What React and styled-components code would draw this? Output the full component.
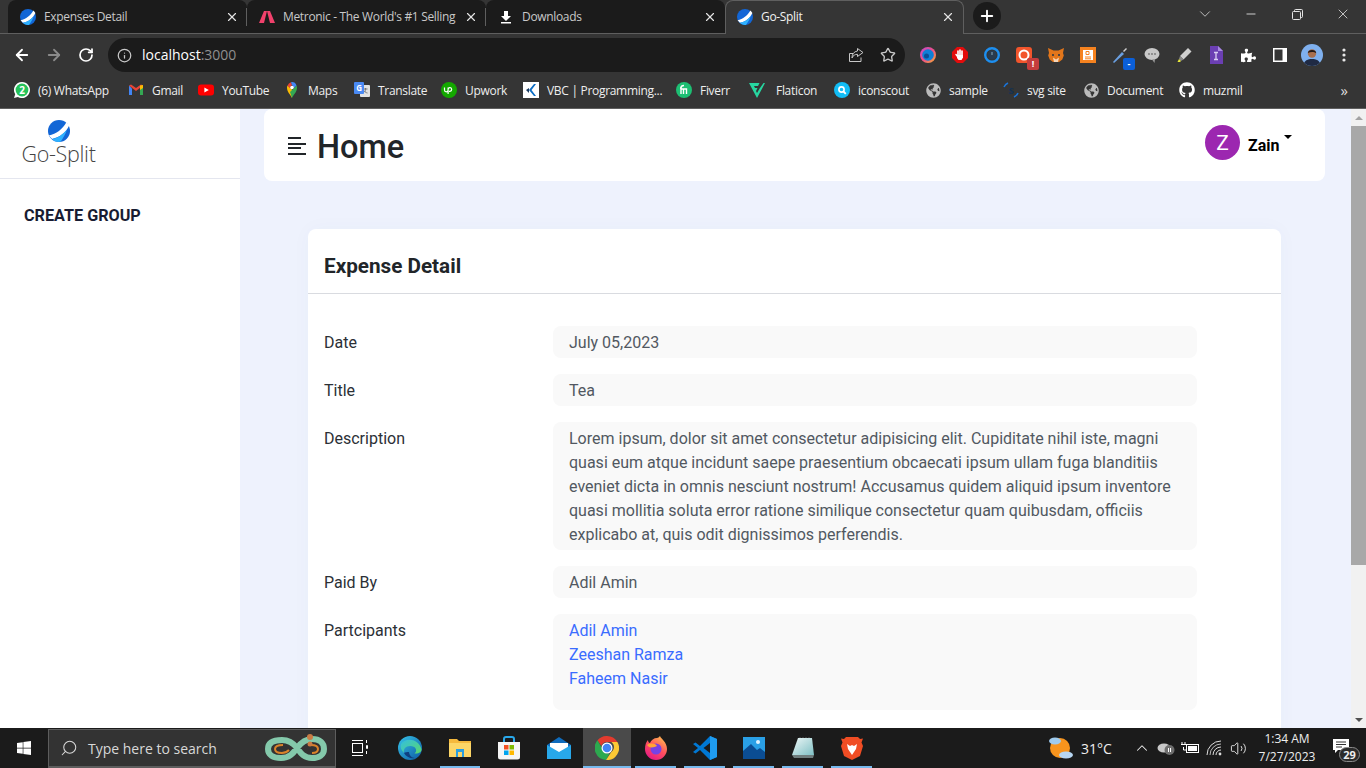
import React from 'react'
import styled, { createGlobalStyle } from 'styled-components'
import { ArrowLeft, ArrowRight, RotateCw, Info, Star, X, Plus, ChevronDown, Minus, Search, ChevronUp, Volume2 } from 'lucide-react'
import { FaGithub, FaPuzzlePiece, FaGlobeAmericas, FaWindows } from 'react-icons/fa'

const Global = createGlobalStyle`
  html, body { margin: 0; padding: 0; overflow: hidden; height: 100%; }
  #root { height: 100%; }
  * { box-sizing: border-box; }
  body { font-family: Roboto, "Noto Sans", sans-serif; }
`

const Screen = styled.div`
  height: 100vh;
  display: flex;
  flex-direction: column;
  background: #eef2fd;
`

/* browser chrome */
const BrowserBar = styled.div`
  flex: none;
  height: 109px;
  background: #353535;
  border-bottom: 1px solid #5f5f5f;
  font-family: "Open Sans", sans-serif;
  color: #e8eaed;
`
const TabStrip = styled.div`
  height: 34px;
  display: flex;
  align-items: flex-end;
  padding-left: 8px;
  border-bottom: 1px solid #5f5f5f;
`
const Tab = styled.div`
  position: relative;
  width: 239px;
  height: ${p => (p.$active ? '34px' : '33px')};
  margin-bottom: ${p => (p.$active ? '-1px' : '0')};
  display: flex;
  align-items: center;
  gap: 8px;
  padding: ${p => (p.$active ? '0 8px 2px 11px' : '0 8px 0 12px')};
  font-size: 12px;
  letter-spacing: -0.33px;
  background: ${p => (p.$active ? '#353535' : '#1b1b1b')};
  color: ${p => (p.$active ? '#f1f1f1' : '#c9c9c9')};
  border-radius: 8px 8px 0 0;
  border: ${p => (p.$active ? '1px solid #5f5f5f' : 'none')};
  border-bottom: none;
  span { flex: 1; white-space: nowrap; overflow: hidden; }
  svg { flex: none; }
  &::after {
    content: "";
    display: ${p => (p.$sep ? 'block' : 'none')};
    position: absolute;
    right: 0;
    top: 8px;
    height: 18px;
    width: 1px;
    background: #5f5f5f;
  }
`
const NewTab = styled.div`
  width: 28px;
  height: 28px;
  margin: 0 0 2px 9px;
  border-radius: 50%;
  background: #1b1b1b;
  color: #fff;
  display: flex;
  align-items: center;
  justify-content: center;
  align-self: center;
`
const WindowControls = styled.div`
  margin-left: auto;
  display: flex;
  align-self: flex-start;
  height: 28px;
  color: #e4e4e4;
`
const WindowButton = styled.div`
  width: 46px;
  display: flex;
  align-items: center;
  justify-content: center;
`
const Toolbar = styled.div`
  height: 38px;
  display: flex;
  align-items: center;
  padding-top: 4px;
`
const NavButton = styled.div`
  width: 32px;
  height: 32px;
  display: flex;
  align-items: center;
  justify-content: center;
  color: ${p => (p.$off ? '#8a8a8a' : '#fff')};
  &:first-child { margin-left: 6px; }
`
const Omnibox = styled.div`
  width: 797px;
  height: 34px;
  margin-left: 6px;
  border-radius: 17px;
  background: #1b1b1b;
  display: flex;
  align-items: center;
  padding: 0 1px 0 9px;
  font-size: 14px;
  color: #fff;
  em { font-style: normal; color: #8f8f8f; }
`
const Address = styled.div`
  flex: 1;
  margin-left: 10px;
  margin-top: -1px;
`
const OmniIcon = styled.div`
  width: 32px;
  display: flex;
  justify-content: center;
  color: #c8c8c8;
`
const Extensions = styled.div`
  margin-left: 7px;
  display: flex;
`
const ExtCell = styled.div`
  position: relative;
  width: 32px;
  height: 32px;
  display: flex;
  align-items: center;
  justify-content: center;
  color: #fff;
`
const ExtBadge = styled.div`
  position: absolute;
  right: 1px;
  bottom: 1px;
  width: 12px;
  height: 12px;
  border-radius: 2px;
  background: ${p => p.$bg};
  color: #fff;
  font-size: 9px;
  font-weight: 700;
  line-height: 12px;
  text-align: center;
`
const Bookmarks = styled.div`
  height: 36px;
  display: flex;
  align-items: center;
  padding-left: 14px;
`
const Bookmark = styled.div`
  width: ${p => p.$w}px;
  flex: none;
  display: flex;
  align-items: center;
  gap: 8px;
  font-size: 12px;
  letter-spacing: -0.3px;
  color: #eee;
  white-space: nowrap;
  svg { flex: none; }
`
const More = styled.div`
  margin-left: auto;
  margin-right: 18px;
  font-size: 15px;
  color: #ddd;
`

/* page */
const Page = styled.div`
  flex: 1;
  min-height: 0;
  display: flex;
  overflow: hidden;
`
const Sidebar = styled.aside`
  width: 240px;
  flex: none;
  background: #fff;
`
const Brand = styled.div`
  height: 69px;
  width: 117px;
  display: flex;
  flex-direction: column;
  align-items: center;
  padding-top: 11px;
`
const BrandRule = styled.div`
  height: 1px;
  background: #e4e6ef;
`
const BrandName = styled.div`
  font-family: "Open Sans", sans-serif;
  font-weight: 300;
  font-size: 21.5px;
  line-height: 23px;
  letter-spacing: -0.3px;
  color: #444;
`
const SideLink = styled.div`
  padding: 26px 24px;
  font-size: 16.2px;
  line-height: 22px;
  font-weight: 700;
  color: #181c32;
`
const Main = styled.main`
  flex: 1;
  min-width: 0;
  overflow: hidden;
`
const Header = styled.header`
  height: 72px;
  margin: 0 26px 48px 24px;
  background: #fff;
  border-radius: 8px;
  display: flex;
  align-items: center;
  padding: 4px 32px 0 24px;
  svg { margin-top: -2px; }
`
const Title = styled.h1`
  margin: 0 0 0 11px;
  font-size: 32.5px;
  line-height: 1;
  font-weight: 500;
  color: #212529;
`
const User = styled.div`
  margin-left: auto;
  display: flex;
  align-items: center;
  gap: 8px;
  padding-right: 9px;
  margin-top: -9px;
`
const Avatar = styled.div`
  width: 35px;
  height: 35px;
  border-radius: 50%;
  background: #9c27b0;
  color: #fff;
  font-size: 21px;
  display: flex;
  align-items: center;
  justify-content: center;
`
const UserName = styled.div`
  position: relative;
  width: 36px;
  font-size: 16px;
  font-weight: 700;
  color: #000;
  padding-top: 6px;
  &::after {
    content: "";
    position: absolute;
    left: 36px;
    top: 5px;
    border-left: 4.5px solid transparent;
    border-right: 4.5px solid transparent;
    border-top: 4px solid #000;
  }
`
const Card = styled.section`
  margin: 0 70px 0 68px;
  background: #fff;
  border-radius: 8px;
  box-shadow: 0 0 20px rgba(76, 87, 125, 0.03);
`
const CardHead = styled.div`
  height: 65px;
  padding: 24px 16px 0;
  border-bottom: 1px solid #d9dbe0;
  font-size: 20.7px;
  line-height: 27px;
  font-weight: 700;
  color: #212529;
`
const CardBody = styled.div`
  padding: 32px 16px 40px;
  display: grid;
  grid-template-columns: 229px 644px;
  row-gap: 16px;
  font-size: 16px;
  line-height: 24px;
`
const Label = styled.div`
  padding-top: 5px;
  color: #2b3036;
`
const Value = styled.div`
  background: #f9f9f9;
  border-radius: 8px;
  padding: 5px 16px ${p => p.$pb || 3}px;
  color: #515861;
`
const PersonLink = styled.a`
  display: block;
  color: #3a6cff;
  text-decoration: none;
`
const ScrollBar = styled.div`
  width: 15px;
  flex: none;
  background: #f1f1f1;
  display: flex;
  flex-direction: column;
  align-items: center;
`
const ScrollArrow = styled.div`
  flex: none;
  height: 17px;
  display: flex;
  align-items: center;
  justify-content: center;
  &::after {
    content: "";
    border-left: 4px solid transparent;
    border-right: 4px solid transparent;
    ${p => (p.$down ? 'border-top: 4px solid #505050;' : 'border-bottom: 4px solid #a3a3a3;')}
  }
`
const ScrollThumb = styled.div`
  width: 100%;
  height: 439px;
  background: #a8a8a8;
`
const ScrollGap = styled.div`
  flex: 1;
`

/* windows taskbar */
const Taskbar = styled.div`
  flex: none;
  height: 40px;
  background: #1b1b1b;
  display: flex;
  font-family: "Open Sans", sans-serif;
  color: #fff;
`
const StartButton = styled.div`
  width: 48px;
  display: flex;
  align-items: center;
  justify-content: center;
`
const SearchBox = styled.div`
  width: 288px;
  margin-top: 1px;
  background: #333;
  border: 1px solid #5d5d5d;
  border-bottom-width: 2px;
  display: flex;
  align-items: center;
  padding-left: 11px;
  gap: 10px;
  font-size: 14px;
  color: #d8d8d8;
`
const SearchIcon = styled(Search)`
  transform: scaleX(-1);
`
const SearchArt = styled.div`
  margin-left: auto;
  margin-right: 8px;
  display: flex;
`
const TaskButton = styled.div`
  position: relative;
  width: ${p => p.$w || 49}px;
  flex: none;
  display: flex;
  align-items: center;
  justify-content: center;
  padding-bottom: 1px;
  background: ${p => (p.$active ? '#4a4a4a' : 'none')};
  &::after {
    content: "";
    display: ${p => (p.$open ? 'block' : 'none')};
    position: absolute;
    bottom: 0;
    height: 2px;
    left: ${p => (p.$active ? 0 : 4)}px;
    right: ${p => (p.$active ? 0 : 4)}px;
    background: #76b9ed;
  }
`
const Tray = styled.div`
  margin-left: auto;
  display: flex;
  align-items: center;
  color: #eee;
`
const TrayCell = styled.div`
  width: ${p => p.$w || 24}px;
  display: flex;
  align-items: center;
  justify-content: ${p => (p.$left ? 'flex-start' : 'center')};
  padding-left: ${p => (p.$left ? 7 : 0)}px;
  font-size: 14px;
`
const Clock = styled.div`
  width: 74px;
  text-align: center;
  font-size: 12px;
  line-height: 18px;
`
const Notice = styled.div`
  position: relative;
  width: 42px;
  height: 100%;
  display: flex;
  align-items: center;
  justify-content: center;
  padding: 0 8px 4px 0;
`
const NoticeCount = styled.div`
  position: absolute;
  right: 6px;
  bottom: 6px;
  width: 21px;
  height: 15px;
  border-radius: 8px;
  background: #2b2b2b;
  border: 1px solid #8a8a8a;
  font-size: 11px;
  font-weight: 700;
  line-height: 13px;
  text-align: center;
`

const GoSplitMark = ({ size = 16 }) => (
  <svg width={size} height={size} viewBox="0 0 16 16">
    <circle cx="8" cy="8" r="8" fill="#1266d6" />
    <path d="M.6 11.2C6 10.4 10.6 6.4 13.4 1.6l2 2.4C13 9 9 12.4 3 13.8z" fill="#fff" />
    <path d="M3 13.8c4-.7 7.6-3 10.6-6.600-.6 2.600-3 6.600-4.600 8.700-2.500.4-4.700-.5-6-2.100z" fill="#2fb2ff" />
  </svg>
)
const MetronicIcon = () => (
  <svg width="16" height="16" viewBox="0 0 16 16">
    <path d="M5 2h3L5 14H0z" fill="#f1416c" />
    <path d="M8 2h3l5 12h-5z" fill="#f1416c" />
  </svg>
)
const DownloadIcon = () => (
  <svg width="16" height="16" viewBox="0 0 16 16" fill="#fff">
    <path d="M6 2h4v5h3l-5 5-5-5h3z" />
    <rect x="3" y="13" width="10" height="1.500" />
  </svg>
)
const WhatsAppIcon = () => (
  <svg width="16" height="16" viewBox="0 0 16 16">
    <path d="M8 0a8 8 0 0 0-6.800 12.200L0 16l3.900-1.100A8 8 0 1 0 8 0z" fill="#fff" />
    <circle cx="8" cy="8" r="6.400" fill="#25c25a" />
    <text x="8" y="11.500" fontSize="10" fontWeight="700" fill="#fff" textAnchor="middle" fontFamily="Open Sans">2</text>
  </svg>
)
const GmailIcon = () => (
  <svg width="16" height="16" viewBox="0 0 16 16">
    <path d="M1 3.500V13h3V6.500z" fill="#4285f4" />
    <path d="M12 6.500V13h3V3.500z" fill="#34a853" />
    <path d="M1 3.500 8 9l7-5.500-2-1L8 6 3 2.500z" fill="#ea4335" />
    <path d="M12 3.500 15 3v3l-3 2z" fill="#fbbc04" />
  </svg>
)
const YouTubeIcon = () => (
  <svg width="16" height="16" viewBox="0 0 16 16">
    <rect y="2.500" width="16" height="11" rx="3" fill="#f00" />
    <path d="M6.400 5.500 10.800 8l-4.400 2.500z" fill="#fff" />
  </svg>
)
const MapsIcon = () => (
  <svg width="16" height="16" viewBox="0 0 16 16">
    <path d="M8 16C6 12 3 10 3 5.500 3 5 3.200 4 3.600 3.400L8 7.500z" fill="#fbbc04" />
    <path d="M8 16c2-4 5-6 5-10.500 0-.7-.2-1.400-.5-2L6 10z" fill="#34a853" />
    <path d="M3.600 3.400A5 5 0 0 1 7 .2L8 3 5.500 6z" fill="#ea4335" />
    <path d="M7 .2A5 5 0 0 1 12.500 3.500L10 6 8 3z" fill="#4285f4" />
    <circle cx="8" cy="5.500" r="1.800" fill="#fff" />
  </svg>
)
const TranslateIcon = () => (
  <svg width="16" height="16" viewBox="0 0 16 16">
    <rect x="6" y="3" width="10" height="12" rx="1" fill="#e2e2e2" />
    <path d="M9.500 7h4M11.500 6v1c0 2-1 3-2.500 4M10.500 9c.6 1 1.500 1.700 3 2" stroke="#777" fill="none" />
    <rect width="10" height="12" rx="1" fill="#4a8af4" />
    <text x="5" y="9" fontSize="8" fontWeight="700" fill="#fff" textAnchor="middle" fontFamily="Open Sans">G</text>
  </svg>
)
const UpworkIcon = () => (
  <svg width="16" height="16" viewBox="0 0 16 16">
    <circle cx="8" cy="8" r="8" fill="#14a800" />
    <path d="M3.500 5.500V8a1.800 1.800 0 0 0 3.600 0V7.300a1.800 1.800 0 1 1 1.800 2H8M7.100 12V5.500" stroke="#fff" strokeWidth="1.200" fill="none" />
  </svg>
)
const VbcIcon = () => (
  <svg width="16" height="16" viewBox="0 0 16 16">
    <rect width="16" height="16" fill="#fff" />
    <path d="M6 8 11 2h2L8.500 8l4.500 6h-2z" fill="#0a6cc4" />
    <path d="M3 8l3-2v5z" fill="#1c3a5e" />
  </svg>
)
const FiverrIcon = () => (
  <svg width="16" height="16" viewBox="0 0 16 16">
    <circle cx="8" cy="8" r="8" fill="#1dbf73" />
    <path d="M5 12V6h-1M5 6c0-2 1-2.500 3-2.500M5 7h5.500v5M7.500 7v5" stroke="#fff" strokeWidth="1.400" fill="none" />
  </svg>
)
const FlaticonIcon = () => (
  <svg width="19" height="16" viewBox="0 0 19 16">
    <path d="M0 1h10.500L9 4H5l1 2h2.500L7 9l1 2 2.300-4L14.500 1H16l-8 15z" fill="#27d6a0" />
  </svg>
)
const IconScoutIcon = () => (
  <svg width="16" height="16" viewBox="0 0 16 16">
    <circle cx="8" cy="8" r="8" fill="#12bdf5" />
    <circle cx="7.500" cy="7.500" r="2.600" stroke="#fff" strokeWidth="1.600" fill="none" />
    <path d="m9.500 9.500 2.300 2.300" stroke="#fff" strokeWidth="1.800" />
  </svg>
)
const SvgSiteIcon = () => (
  <svg width="16" height="16" viewBox="0 0 16 16" fill="none">
    <path d="M1 5a8 8 0 0 1 4-4M15 11a8 8 0 0 1-4 4" stroke="#1a73d8" strokeWidth="1.500" />
    <text x="8" y="12" fontSize="11" fontWeight="700" fill="#17314f" textAnchor="middle" fontFamily="Open Sans">s</text>
  </svg>
)
const ShareIcon = () => (
  <svg width="16" height="16" viewBox="0 0 16 16" fill="none" stroke="currentColor" strokeWidth="1">
    <path d="M13 10.500V14.500H1.500V6.500H5" />
    <path d="M9.500 1.500 15 5.500 9.500 9.500V7.300C7 7.300 5 8.500 4 11c0-4 2-6.500 5.500-7z" />
  </svg>
)
const ColorRing = () => (
  <svg width="16" height="16" viewBox="0 0 16 16">
    <defs>
      <linearGradient id="ring" x1="0" y1="0" x2="1" y2="1">
        <stop offset="0" stopColor="#c04bd0" />
        <stop offset=".5" stopColor="#ee4f88" />
        <stop offset="1" stopColor="#f7b32f" />
      </linearGradient>
    </defs>
    <circle cx="8" cy="8" r="8" fill="url(#ring)" />
    <circle cx="8" cy="8" r="5.800" fill="#0f7fd6" />
    <circle cx="6.500" cy="9" r="2.500" fill="#0a4d96" />
  </svg>
)
const BlockIcon = () => (
  <svg width="16" height="16" viewBox="0 0 16 16">
    <path d="M5 0h6l5 5v6l-5 5H5l-5-5V5z" fill="#e40c0c" />
    <path d="M6 4v5M8 3v6M10 4v5" stroke="#fff" strokeWidth="1.700" strokeLinecap="round" />
    <path d="M5 8h6v2.500L9.500 13h-3L5 11z" fill="#fff" />
    <path d="M4 7.500 6 10" stroke="#fff" strokeWidth="1.500" strokeLinecap="round" />
  </svg>
)
const BlueRing = () => (
  <svg width="16" height="16" viewBox="0 0 16 16" fill="none">
    <circle cx="8" cy="8" r="6.800" stroke="#1d8ff0" strokeWidth="2.400" />
    <circle cx="8" cy="8" r="4.500" fill="#283b50" />
    <path d="M8 5v3" stroke="#8ab" />
  </svg>
)
const CaptureIcon = () => (
  <svg width="16" height="16" viewBox="0 0 16 16" fill="none">
    <rect width="16" height="16" rx="3" fill="#f3552c" />
    <circle cx="8" cy="8" r="4.500" stroke="#fff" strokeWidth="2" />
  </svg>
)
const FoxIcon = () => (
  <svg width="16" height="16" viewBox="0 0 16 16">
    <path d="M0 1l5.500 2.500h5L16 1l-1 5 .8 2.500-1.500 4-3.300 2.500H5l-3.300-2.500-1.500-4L1 6z" fill="#e2761b" />
    <path d="M5 10.500 8 12.500l3-2-1 4.500H6z" fill="#f6d5b8" />
    <circle cx="5" cy="8" r="1" fill="#233447" />
    <circle cx="11" cy="8" r="1" fill="#233447" />
  </svg>
)
const SlidesIcon = () => (
  <svg width="16" height="16" viewBox="0 0 16 16">
    <rect width="16" height="16" fill="#f5821f" />
    <rect x="3" y="3" width="10" height="10" fill="#fff" />
    <path d="M5 10h6M5 11.800h6M6 4.500h3v3H6z" stroke="#f5821f" fill="none" />
  </svg>
)
const DropperIcon = () => (
  <svg width="16" height="16" viewBox="0 0 16 16">
    <path d="M1 15 10 5l2 2-10 9z" fill="#6a9fe0" />
    <path d="M11 4l3-3 1 1-3 3z" fill="#cfcfcf" />
  </svg>
)
const BalloonIcon = () => (
  <svg width="16" height="16" viewBox="0 0 16 16">
    <ellipse cx="8" cy="7" rx="7.500" ry="6" fill="#c8c8c8" />
    <path d="M8 12.500 10.500 16l.5-4z" fill="#9a9a9a" />
    <circle cx="5" cy="7" r=".9" fill="#777" />
    <circle cx="8" cy="7" r=".9" fill="#777" />
    <circle cx="11" cy="7" r=".9" fill="#777" />
  </svg>
)
const MarkerIcon = () => (
  <svg width="16" height="16" viewBox="0 0 16 16">
    <path d="M4 9 12 1l3.500 3.500-8 8z" fill="#cfcfcf" />
    <path d="M4 9l3.500 3.500L5 14l-2-2z" fill="#8a8a8a" />
    <path d="M3 12l2 2-1 1H1.500z" fill="#e8e83a" />
  </svg>
)
const PurpleDoc = () => (
  <svg width="16" height="18" viewBox="0 0 16 18">
    <path d="M2 0h8l5 5v13H2z" fill="#6b3fb3" />
    <path d="M10 0v5h5z" fill="#a98be0" />
    <path d="M6 6.500h4M8 6.500v7M6 13.500h4" stroke="#d9cdf2" strokeWidth="1.300" />
  </svg>
)
const SidePanel = () => (
  <svg width="14" height="14" viewBox="0 0 14 14">
    <rect width="14" height="14" fill="#fff" />
    <rect x="1.500" y="1.500" width="8" height="11" fill="#353535" />
  </svg>
)
const ProfileIcon = () => (
  <svg width="22" height="22" viewBox="0 0 22 22">
    <clipPath id="profile"><circle cx="11" cy="11" r="11" /></clipPath>
    <g clipPath="url(#profile)">
      <rect width="22" height="22" fill="#7fb0ee" />
      <path d="M2 22c1-6 5-7 9-7s8 1 9 7z" fill="#1f2a44" />
      <circle cx="11" cy="9.500" r="4.200" fill="#a86f4f" />
      <path d="M6.800 9c0-4 8.400-4 8.400 0-2-1.500-6-1.500-8.400 0z" fill="#221a18" />
    </g>
  </svg>
)
const Dots = () => (
  <svg width="4" height="14" viewBox="0 0 4 14" fill="#e8e8e8">
    <circle cx="2" cy="2" r="1.600" />
    <circle cx="2" cy="7" r="1.600" />
    <circle cx="2" cy="12" r="1.600" />
  </svg>
)
const RestoreIcon = () => (
  <svg width="11" height="11" viewBox="0 0 11 11" fill="none" stroke="currentColor">
    <rect x=".5" y="2.500" width="8" height="8" rx="1" />
    <path d="M2.500 2.500V1.500a1 1 0 0 1 1-1h6a1 1 0 0 1 1 1v6a1 1 0 0 1-1 1h-1" />
  </svg>
)
const MenuLines = () => (
  <svg width="18" height="18" viewBox="0 0 18 18" stroke="#212529" strokeWidth="2">
    <path d="M0 1h13M0 7h18M0 11h13M0 17h18" />
  </svg>
)

const SnakeArt = () => (
  <svg width="62" height="34" viewBox="0 0 62 34" fill="none">
    <path d="M17 9C8 9 3 12 3 18s5 9 13 9c9 0 13-6 16-10s7-9 15-9c8 0 12 4 12 10s-5 9-12 9c-9 0-12-6-15-10S24 9 17 9z" stroke="#84c9ab" strokeWidth="6" />
    <path d="M18 14c-5 0-8 1-8 4s3 4 7 4c3 0 5-1 7-3M46 14c5 0 7 1 7 4s-3 4-6 4" stroke="#d9832a" strokeWidth="2" />
    <circle cx="45" cy="6" r="3" fill="#c97c45" />
    <circle cx="45" cy="13" r="2.500" fill="#c97c45" />
  </svg>
)
const TaskViewIcon = () => (
  <svg width="16" height="16" viewBox="0 0 16 16" fill="none" stroke="#fff">
    <path d="M0 .5h11M0 15.500h11" />
    <rect x=".5" y="3.500" width="10" height="9" />
    <path d="M14.500 0v3M14.500 5.500h1v3h-1zM14.500 11v3" />
  </svg>
)
const EdgeIcon = () => (
  <svg width="24" height="24" viewBox="0 0 24 24">
    <defs>
      <linearGradient id="edgeA" x1="0" y1="0" x2="1" y2="1">
        <stop offset="0" stopColor="#37c4e8" />
        <stop offset="1" stopColor="#0c59a4" />
      </linearGradient>
      <linearGradient id="edgeB" x1="0" y1="0" x2="1" y2="1">
        <stop offset="0" stopColor="#33bfe0" />
        <stop offset="1" stopColor="#5ad66b" />
      </linearGradient>
    </defs>
    <circle cx="12" cy="12" r="12" fill="url(#edgeA)" />
    <path d="M3 8c3-6 17-7 20.500 5 .5 3-3 5-7 4.500 3-2 2-7-3.500-7.500C8 9.500 5 13 6 17 3 14 2 11 3 8z" fill="url(#edgeB)" />
    <path d="M6 17c2 4 7 6 11 5-3 0-6-3-6-6-2 0-4 0-5 1z" fill="#0f3f80" />
  </svg>
)
const FolderIcon = () => (
  <svg width="22" height="20" viewBox="0 0 22 20">
    <path d="M0 1h8l2 2h12v16H0z" fill="#f5b93d" />
    <path d="M0 5h22v14H0z" fill="#fcd667" />
    <path d="M7 11h8v8H7z" fill="#2b9fe0" />
    <path d="M9 14h4v5H9z" fill="#fcd667" />
  </svg>
)
const StoreIcon = () => (
  <svg width="24" height="24" viewBox="0 0 24 24">
    <path d="M7 6V3a2 2 0 0 1 2-2h6a2 2 0 0 1 2 2v3" stroke="#29a8ea" strokeWidth="2" fill="none" />
    <path d="M1 6h22v15a2.500 2.500 0 0 1-2.500 2.500h-17A2.500 2.500 0 0 1 1 21z" fill="#f5f5f5" />
    <rect x="7" y="9" width="4.500" height="4.500" fill="#f25022" />
    <rect x="12.500" y="9" width="4.500" height="4.500" fill="#7fba00" />
    <rect x="7" y="14.500" width="4.500" height="4.500" fill="#00a4ef" />
    <rect x="12.500" y="14.500" width="4.500" height="4.500" fill="#ffb900" />
  </svg>
)
const MailIcon = () => (
  <svg width="24" height="22" viewBox="0 0 24 22">
    <path d="M0 8 12 0l12 8v14H0z" fill="#0f6cbd" />
    <path d="M3 6h18v6l-9 5-9-5z" fill="#fff" />
    <path d="M0 8l12 7 12-7v14H0z" fill="#28a8ea" />
  </svg>
)
const ChromeIcon = () => (
  <svg width="24" height="24" viewBox="0 0 24 24">
    <path d="M12 0a12 12 0 0 1 10.400 6H12a6 6 0 0 0-5.700 4L2.500 4.300A12 12 0 0 1 12 0z" fill="#e33b2e" />
    <path d="M2.500 4.300 8 14a6 6 0 0 0 6.500 3.500L11 24A12 12 0 0 1 2.500 4.300z" fill="#2da94f" />
    <path d="M22.400 6A12 12 0 0 1 11 24l5.300-8a6 6 0 0 0 0-10z" fill="#fcc934" />
    <circle cx="12" cy="12" r="5.500" fill="#fff" />
    <circle cx="12" cy="12" r="4.300" fill="#4285f4" />
  </svg>
)
const FirefoxIcon = () => (
  <svg width="24" height="24" viewBox="0 0 24 24">
    <defs>
      <linearGradient id="fox" x1="0.800" y1="0" x2="0.200" y2="1">
        <stop offset="0" stopColor="#ffbd4f" />
        <stop offset=".5" stopColor="#ff4f5e" />
        <stop offset="1" stopColor="#e31587" />
      </linearGradient>
    </defs>
    <path d="M16 0c1 3 7 6 7 13a11 11 0 0 1-22 0C1 9 2 6 4 4c0 2 1 3 2 3 1-3 4-5 7-5 1 0 2-1 3-2z" fill="url(#fox)" />
    <circle cx="12" cy="13" r="5.500" fill="#7542e5" />
    <path d="M3 9c3-2 8-2 10 1-2 1-5 2-8 1z" fill="#ffa436" />
  </svg>
)
const VsCodeIcon = () => (
  <svg width="24" height="24" viewBox="0 0 24 24">
    <path d="M17 0 7 10 2.500 6.500 0 8l5 4-5 4 2.500 1.500L7 14l10 10 7-3V3z" fill="#0078d4" />
    <path d="M17 0l7 3v18l-7 3z" fill="#1f9cf0" />
    <path d="M17 7 10.500 12 17 17z" fill="#1b1b1b" />
  </svg>
)
const PhotosIcon = () => (
  <svg width="22" height="22" viewBox="0 0 22 22">
    <rect width="22" height="22" fill="#2aa0e6" />
    <path d="M0 14 8 7l6 6 3-2 5 4v7H0z" fill="#0b4d93" />
    <circle cx="15" cy="5" r="2" fill="#dff3ff" />
  </svg>
)
const NotesIcon = () => (
  <svg width="24" height="22" viewBox="0 0 24 22">
    <defs>
      <linearGradient id="note" x1="0" y1="0" x2="1" y2="1">
        <stop offset="0" stopColor="#eef7f7" />
        <stop offset="1" stopColor="#7fc0c4" />
      </linearGradient>
    </defs>
    <path d="M7 1h14l2 17H1z" fill="url(#note)" />
    <path d="M9 1v-.5M12 1v-.5M15 1v-.5M18 1v-.5" stroke="#999" />
    <path d="M1 18h22l-1 3H3z" fill="#6f7d7d" />
  </svg>
)
const BraveIcon = () => (
  <svg width="22" height="24" viewBox="0 0 22 24">
    <path d="M5 1h12l2 2 3-.5-1.500 4 1.500 3.500-3 10-8 4-8-4-3-10 1.500-3.500L0 2.500 3 3z" fill="#f04d24" />
    <path d="M6 8l3 2 2-1 2 1 3-2-1 5-2 3-2 3-2-3-2-3z" fill="#fff" />
  </svg>
)
const WeatherIcon = () => (
  <svg width="26" height="24" viewBox="0 0 26 24">
    <circle cx="12" cy="12" r="10" fill="#f7941d" />
    <ellipse cx="7" cy="5" rx="6" ry="3.500" fill="#9fcbee" />
    <ellipse cx="18" cy="19" rx="7" ry="3.500" fill="#b7d6f2" />
  </svg>
)
const CloudPause = () => (
  <svg width="18" height="16" viewBox="0 0 18 16">
    <ellipse cx="7" cy="8" rx="6.500" ry="4.500" fill="#c8c8c8" />
    <circle cx="12.500" cy="10" r="5" fill="#6e6e6e" />
    <path d="M11.500 8v4M13.500 8v4" stroke="#fff" />
  </svg>
)
const BatteryIcon = () => (
  <svg width="18" height="14" viewBox="0 0 18 14" fill="none" stroke="#fff">
    <rect x="5.500" y="3.500" width="12" height="8" />
    <rect x="7" y="5" width="9" height="5" fill="#fff" stroke="none" />
    <path d="M1 1v2M4 1v2M0 3.500h5M2.500 6v3h3" />
  </svg>
)
const WifiIcon = () => (
  <svg width="16" height="16" viewBox="0 0 16 16" fill="none" stroke="#ddd">
    <path d="M1 15A14 14 0 0 1 15 1" />
    <path d="M4 15A11 11 0 0 1 15 4" opacity=".8" />
    <path d="M7 15a8 8 0 0 1 8-8" />
    <path d="M10 15a5 5 0 0 1 5-5" />
    <circle cx="14" cy="14" r="1.400" fill="#ddd" stroke="none" />
  </svg>
)
const NoticeIcon = () => (
  <svg width="16" height="14" viewBox="0 0 16 14">
    <path d="M0 0h16v11H5l-3 3v-3H0z" fill="#fff" />
    <path d="M3 3h10M3 5.500h10M3 8h6" stroke="#333" />
  </svg>
)

const tabs = [
  { icon: <GoSplitMark />, label: 'Expenses Detail', sep: true },
  { icon: <MetronicIcon />, label: "Metronic - The World's #1 Selling", sep: true },
  { icon: <DownloadIcon />, label: 'Downloads' },
  { icon: <GoSplitMark />, label: 'Go-Split', active: true },
]

const marks = [
  { icon: <WhatsAppIcon />, label: '(6) WhatsApp', w: 114 },
  { icon: <GmailIcon />, label: 'Gmail', w: 70 },
  { icon: <YouTubeIcon />, label: 'YouTube', w: 86 },
  { icon: <MapsIcon />, label: 'Maps', w: 70 },
  { icon: <TranslateIcon />, label: 'Translate', w: 87 },
  { icon: <UpworkIcon />, label: 'Upwork', w: 82 },
  { icon: <VbcIcon />, label: 'VBC | Programming...', w: 153 },
  { icon: <FiverrIcon />, label: 'Fiverr', w: 73 },
  { icon: <FlaticonIcon />, label: 'Flaticon', w: 85 },
  { icon: <IconScoutIcon />, label: 'iconscout', w: 92 },
  { icon: <FaGlobeAmericas size={15} color="#bbb" />, label: 'sample', w: 77 },
  { icon: <SvgSiteIcon />, label: 'svg site', w: 81 },
  { icon: <FaGlobeAmericas size={15} color="#bbb" />, label: 'Document', w: 95 },
  { icon: <FaGithub size={16} color="#fff" />, label: 'muzmil', w: 80 },
]

const apps = [
  { icon: <EdgeIcon />, w: 52 },
  { icon: <FolderIcon />, w: 48, open: true },
  { icon: <StoreIcon />, w: 50 },
  { icon: <MailIcon />, w: 49 },
  { icon: <ChromeIcon />, w: 48, open: true, active: true },
  { icon: <FirefoxIcon />, w: 49, open: true },
  { icon: <VsCodeIcon />, w: 49, open: true },
  { icon: <PhotosIcon />, w: 49, open: true },
  { icon: <NotesIcon />, w: 49, open: true },
  { icon: <BraveIcon />, w: 49, open: true },
]

const expense = [
  { label: 'Date', value: 'July 05,2023' },
  { label: 'Title', value: 'Tea' },
  {
    label: 'Description',
    value:
      'Lorem ipsum, dolor sit amet consectetur adipisicing elit. Cupiditate nihil iste, magni quasi eum atque incidunt saepe praesentium obcaecati ipsum ullam fuga blanditiis eveniet dicta in omnis nesciunt nostrum! Accusamus quidem aliquid ipsum inventore quasi mollitia soluta error ratione similique consectetur quam quibusdam, officiis explicabo at, quis odit dignissimos perferendis.',
  },
  { label: 'Paid By', value: 'Adil Amin' },
]

const people = ['Adil Amin', 'Zeeshan Ramza', 'Faheem Nasir']

export default function App() {
  return (
    <Screen>
      <Global />
      <BrowserBar>
        <TabStrip>
          {tabs.map(t => (
            <Tab key={t.label} $active={t.active} $sep={t.sep}>
              {t.icon}
              <span>{t.label}</span>
              <X size={14} color="#e4e4e4" />
            </Tab>
          ))}
          <NewTab><Plus size={18} strokeWidth={2.5} /></NewTab>
          <WindowControls>
            <WindowButton><ChevronDown size={18} strokeWidth={1} /></WindowButton>
            <WindowButton><Minus size={14} strokeWidth={1.5} /></WindowButton>
            <WindowButton><RestoreIcon /></WindowButton>
            <WindowButton><X size={16} strokeWidth={1.2} /></WindowButton>
          </WindowControls>
        </TabStrip>
        <Toolbar>
          <NavButton><ArrowLeft size={18} strokeWidth={2.4} /></NavButton>
          <NavButton $off><ArrowRight size={18} strokeWidth={2.4} /></NavButton>
          <NavButton><RotateCw size={16} strokeWidth={2.6} /></NavButton>
          <Omnibox>
            <Info size={15} color="#c8c8c8" />
            <Address>localhost<em>:3000</em></Address>
            <OmniIcon><ShareIcon /></OmniIcon>
            <OmniIcon><Star size={16} /></OmniIcon>
          </Omnibox>
          <Extensions>
            <ExtCell><ColorRing /></ExtCell>
            <ExtCell><BlockIcon /></ExtCell>
            <ExtCell><BlueRing /></ExtCell>
            <ExtCell><CaptureIcon /><ExtBadge $bg="#c43d3d">!</ExtBadge></ExtCell>
            <ExtCell><FoxIcon /></ExtCell>
            <ExtCell><SlidesIcon /></ExtCell>
            <ExtCell><DropperIcon /><ExtBadge $bg="#0b5fd8">-</ExtBadge></ExtCell>
            <ExtCell><BalloonIcon /></ExtCell>
            <ExtCell><MarkerIcon /></ExtCell>
            <ExtCell><PurpleDoc /></ExtCell>
            <ExtCell><FaPuzzlePiece size={15} /></ExtCell>
            <ExtCell><SidePanel /></ExtCell>
            <ExtCell><ProfileIcon /></ExtCell>
            <ExtCell><Dots /></ExtCell>
          </Extensions>
        </Toolbar>
        <Bookmarks>
          {marks.map(m => (
            <Bookmark key={m.label} $w={m.w}>
              {m.icon}
              {m.label}
            </Bookmark>
          ))}
          <More>»</More>
        </Bookmarks>
      </BrowserBar>

      <Page>
        <Sidebar>
          <Brand>
            <GoSplitMark size={22} />
            <BrandName>Go-Split</BrandName>
          </Brand>
          <BrandRule />
          <SideLink>CREATE GROUP</SideLink>
        </Sidebar>
        <Main>
          <Header>
            <MenuLines />
            <Title>Home</Title>
            <User>
              <Avatar>Z</Avatar>
              <UserName>Zain</UserName>
            </User>
          </Header>
          <Card>
            <CardHead>Expense Detail</CardHead>
            <CardBody>
              {expense.map(row => (
                <React.Fragment key={row.label}>
                  <Label>{row.label}</Label>
                  <Value>{row.value}</Value>
                </React.Fragment>
              ))}
              <Label>Partcipants</Label>
              <Value $pb={19}>
                {people.map(name => (
                  <PersonLink key={name} href="#">{name}</PersonLink>
                ))}
              </Value>
            </CardBody>
          </Card>
        </Main>
        <ScrollBar>
          <ScrollArrow />
          <ScrollThumb />
          <ScrollGap />
          <ScrollArrow $down />
        </ScrollBar>
      </Page>

      <Taskbar>
        <StartButton><FaWindows size={16} /></StartButton>
        <SearchBox>
          <SearchIcon size={18} strokeWidth={1.4} />
          Type here to search
          <SearchArt><SnakeArt /></SearchArt>
        </SearchBox>
        <TaskButton $w={48}><TaskViewIcon /></TaskButton>
        {apps.map((a, i) => (
          <TaskButton key={i} $w={a.w} $open={a.open} $active={a.active}>{a.icon}</TaskButton>
        ))}
        <Tray>
          <TrayCell $w={26}><WeatherIcon /></TrayCell>
          <TrayCell $w={56} $left>31°C</TrayCell>
          <TrayCell><ChevronUp size={18} strokeWidth={1.4} /></TrayCell>
          <TrayCell><CloudPause /></TrayCell>
          <TrayCell><BatteryIcon /></TrayCell>
          <TrayCell><WifiIcon /></TrayCell>
          <TrayCell><Volume2 size={17} strokeWidth={1.3} /></TrayCell>
          <Clock>1:34 AM<br />7/27/2023</Clock>
          <Notice>
            <NoticeIcon />
            <NoticeCount>29</NoticeCount>
          </Notice>
        </Tray>
      </Taskbar>
    </Screen>
  )
}
